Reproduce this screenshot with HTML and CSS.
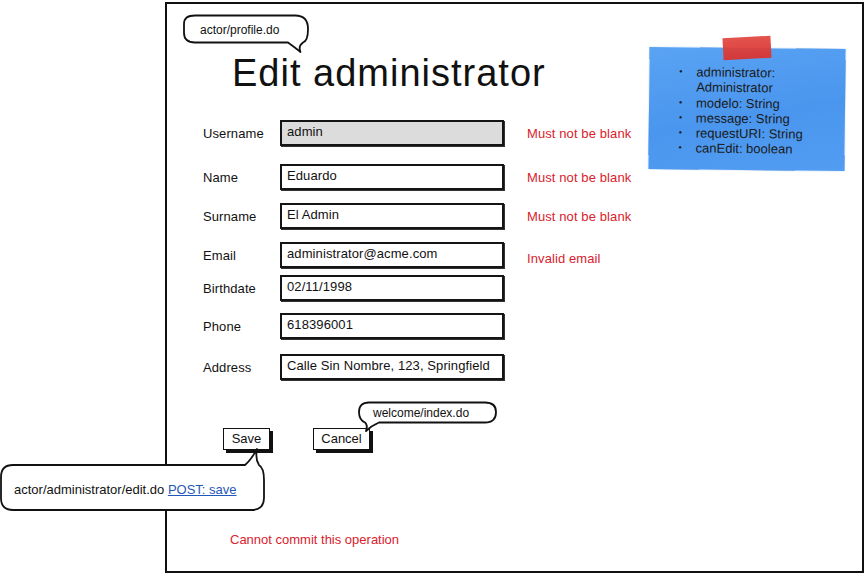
FILE: index.html
```html
<!DOCTYPE html>
<html>
<head>
<meta charset="utf-8">
<link rel="stylesheet" href="styles.css">
</head>
<body>
<div class="canvas">
  <div class="frame">
    <h1 class="title">Edit administrator</h1>
    <div class="form">
      <div class="row r1"><span class="lbl">Username</span><span class="field ro">admin</span><span class="err">Must not be blank</span></div>
      <div class="row r2"><span class="lbl">Name</span><span class="field">Eduardo</span><span class="err">Must not be blank</span></div>
      <div class="row r3"><span class="lbl">Surname</span><span class="field">El Admin</span><span class="err">Must not be blank</span></div>
      <div class="row r4"><span class="lbl">Email</span><span class="field">administrator@acme.com</span><span class="err low">Invalid email</span></div>
      <div class="row r5"><span class="lbl">Birthdate</span><span class="field">02/11/1998</span></div>
      <div class="row r6"><span class="lbl">Phone</span><span class="field">618396001</span></div>
      <div class="row r7"><span class="lbl">Address</span><span class="field">Calle Sin Nombre, 123, Springfield</span></div>
    </div>
    <div class="buttons">
      <span class="btn save">Save</span>
      <span class="btn cancel">Cancel</span>
    </div>
    <p class="commit">Cannot commit this operation</p>
  </div>

  <div class="note">
    <ul class="note-list">
      <li>administrator: Administrator</li>
      <li>modelo: String</li>
      <li>message: String</li>
      <li>requestURI: String</li>
      <li>canEdit: boolean</li>
    </ul>
  </div>
  <div class="tape"></div>

  <div class="bubble b-profile">
    <svg class="bubble-shape" width="132" height="42" viewBox="0 0 132 42">
      <path d="M13 1.5 Q2 1.5 2 10 V19 Q2 28.5 13 28.5 H106 Q111 32 118.5 38 Q116 32 121 28.5 Q126 27 126 15 Q126 1.5 113 1.5 Z" fill="#fff" stroke="#111" stroke-width="1.8" stroke-linejoin="round"/>
    </svg>
    <span class="bubble-text">actor/profile.do</span>
  </div>

  <div class="bubble b-welcome">
    <svg class="bubble-shape" width="142" height="34" viewBox="0 0 142 34">
      <path d="M12 1.5 H128 Q139 1.5 139 11 Q139 21.5 128 21.5 H22 Q14 25 9 30 Q11 24 8 21.5 Q2 19 2 11 Q2 1.5 12 1.5 Z" fill="#fff" stroke="#111" stroke-width="1.8" stroke-linejoin="round"/>
    </svg>
    <span class="bubble-text">welcome/index.do</span>
  </div>

  <div class="bubble b-edit">
    <svg class="bubble-shape" width="268" height="68" viewBox="0 0 268 68">
      <path d="M14 19 H246 Q252 14 258 3 Q256 13 260 19 Q265 22 265 34 V52 Q265 64 252 64 H14 Q2 64 2 52 V31 Q2 19 14 19 Z" fill="#fff" stroke="#111" stroke-width="1.8" stroke-linejoin="round"/>
    </svg>
    <span class="bubble-text">actor/administrator/edit.do <a class="link">POST: save</a></span>
  </div>
</div>
</body>
</html>
```
FILE: styles.css
```css
* { box-sizing: border-box; }
html, body { margin: 0; padding: 0; background: #fff; }
body {
  font-family: "Liberation Sans", Arial, sans-serif;
  color: #111;
}
.canvas {
  position: relative;
  width: 867px;
  height: 575px;
  padding: 2px 0 0 165px;
  overflow: hidden;
}
.frame {
  width: 699px;
  height: 571px;
  border: 2px solid #111;
  display: flex;
  flex-direction: column;
  align-items: flex-start;
}
.title {
  margin: 47px 0 0 65px;
  font-size: 38px;
  line-height: 44px;
  font-weight: normal;
  letter-spacing: 1px;
  color: #111;
}
.form {
  margin: 25px 0 0 36px;
  display: flex;
  flex-direction: column;
}
.row {
  display: grid;
  grid-template-columns: 77px 224px auto;
  align-items: center;
  height: 26px;
  font-size: 13px;
  letter-spacing: 0.1px;
}
.r2 { margin-top: 18px; }
.r3 { margin-top: 13px; }
.r4 { margin-top: 13px; }
.r5 { margin-top: 7px; }
.r6 { margin-top: 12px; }
.r7 { margin-top: 15px; }
.lbl { color: #111; }
.field {
  height: 26px;
  border: 2px solid #151515;
  box-shadow: 1px 1px 0 #333;
  background: #fff;
  padding: 0 0 0 5px;
  line-height: 20px;
  font-size: 13px;
  white-space: nowrap;
  overflow: hidden;
}
.field.ro { background: #dcdcdc; }
.err { color: #d9222c; font-size: 13px; margin-left: 23px; }
.err.low { position: relative; top: 3px; }
.buttons {
  margin: 48px 0 0 56px;
  display: flex;
  gap: 43px;
}
.btn {
  display: block;
  height: 22px;
  border: 1.5px solid #111;
  box-shadow: 3px 3px 0 #111;
  background: #fff;
  font-size: 13px;
  line-height: 19px;
  text-align: center;
}
.save { width: 47px; }
.cancel { width: 57px; }
.commit {
  margin: 82px 0 0 63px;
  font-size: 13px;
  line-height: 16px;
  color: #d9222c;
}
.note {
  position: absolute;
  left: 649px;
  top: 48px;
  width: 196px;
  height: 122px;
  background: linear-gradient(170deg, #5aa3f4 0%, #4a96ee 55%, #529df2 100%);
  transform: rotate(0.6deg);
  box-shadow: 0 0 1px #3b82d6;
}
.note-list {
  margin: 17px 0 0 0;
  padding: 0 0 0 47px;
  list-style: none;
  font-size: 13px;
  line-height: 15.3px;
  color: #1a1a1a;
  width: 162px;
}
.note-list li { position: relative; }
.note-list li::before {
  content: "\2022";
  position: absolute;
  left: -17px;
  font-size: 9px;
}
.tape {
  position: absolute;
  left: 723px;
  top: 37px;
  width: 48px;
  height: 22px;
  background: linear-gradient(180deg, #e24a44 0%, #d93330 100%);
  transform: rotate(-3deg);
  opacity: 0.95;
}
.bubble { position: absolute; }
.bubble-shape { position: absolute; left: 0; top: 0; overflow: visible; }
.bubble-text {
  position: absolute;
  white-space: nowrap;
  font-size: 12px;
  line-height: 14px;
  color: #111;
}
.b-profile { left: 182px; top: 14px; width: 132px; height: 42px; }
.b-profile .bubble-text { left: 18px; top: 9px; }
.b-welcome { left: 357px; top: 401px; width: 142px; height: 34px; }
.b-welcome .bubble-text { left: 16px; top: 5px; }
.b-edit { left: -1px; top: 446px; width: 268px; height: 68px; }
.b-edit .bubble-text { left: 15px; top: 36px; font-size: 13px; line-height: 15px; }
.link { color: #1f58b8; text-decoration: underline; }
```
